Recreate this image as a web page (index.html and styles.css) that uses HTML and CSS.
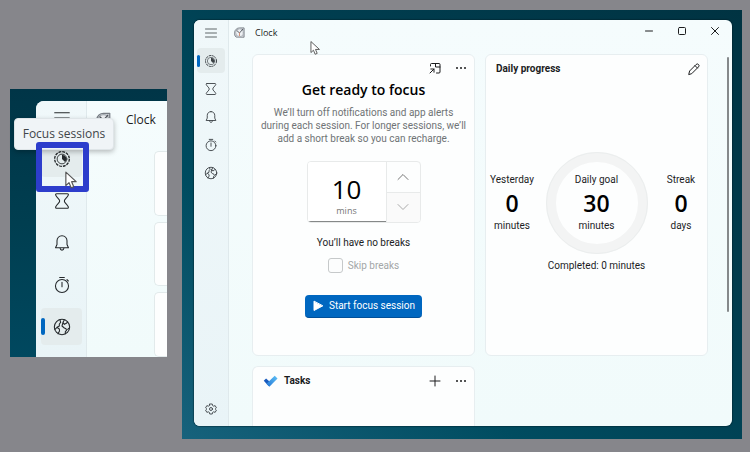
FILE: index.html
```html
<!DOCTYPE html>
<html lang="en">
<head>
<meta charset="utf-8">
<meta name="viewport" content="width=device-width, initial-scale=1">
<title>Clock</title>
<link rel="stylesheet" href="styles.css">
</head>
<body>
<svg class="sprite" aria-hidden="true">
  <linearGradient id="blue" x1="0" y1="1" x2="1" y2="0"><stop offset="0" stop-color="#2374d4"/><stop offset="1" stop-color="#5fc3f7"/></linearGradient>
  <symbol id="menu" viewBox="0 0 24 24"><path d="M1 4h22M1 12h22M1 20h22"/></symbol>
  <symbol id="focus" viewBox="0 0 24 24"><circle class="dashes" cx="12" cy="12" r="11"/><circle cx="12" cy="12" r="7.300" stroke-width="1.300"/><path class="solid" d="M12 5.500a6.500 6.500 0 0 1 4.600 11.100L12 12z"/></symbol>
  <symbol id="timer" viewBox="0 0 24 24"><path d="M4 1h16a1.500 1.500 0 0 1 1.400 2.200C20 7 15.500 9 15.500 12s4.500 5 5.900 8.800A1.500 1.500 0 0 1 20 23H4a1.500 1.500 0 0 1-1.400-2.200C4 17 8.500 15 8.500 12S4 7 2.600 3.200A1.500 1.500 0 0 1 4 1z"/></symbol>
  <symbol id="bell" viewBox="0 0 24 24"><path d="M12 1.200c-4.500 0-7.500 3.300-7.500 7.500v5.500L2.300 19h19.400l-2.200-4.800V8.700c0-4.200-3-7.500-7.500-7.500zM9 19.500c.3 2 1.400 3.200 3 3.200s2.700-1.200 3-3.200"/></symbol>
  <symbol id="stopwatch" viewBox="0 0 24 24"><circle cx="12" cy="13.500" r="9.800"/><path d="M8.500.8h7M12 8v6.500M19.500 4l2 2"/></symbol>
  <symbol id="globe" viewBox="0 0 24 24"><circle cx="12" cy="12" r="11.500"/><path d="M9 1.500l1 3.500-2 2.500v3L4.500 12.500l-3 3M4.500 12.500l3.500 2.500.3 3L6 22M15.500 1.500l-2 3.500 2 3 3-1.500 2-2M13.500 5l-1.500 5.500 3.500 3 2.500 1 .8 2.500-1.800 2 0 3M23 13.500l-2.500 2"/></symbol>
  <symbol id="clock" viewBox="0 0 24 24"><path class="case" d="M4 21.500C1 19 .8 15 1.200 12 2 6 6.500 2 12 2h10v19.500z"/><circle class="dial" cx="12" cy="12.500" r="8.500"/><path d="M6.500 8 12 13l7-8"/><path class="hand" d="M12 13v6"/></symbol>
  <symbol id="pointer" viewBox="0 0 16 24"><path d="M1.500 1.500v17l4-3.800 2.700 6.500 3.300-1.400-2.700-6.300h5.700z"/></symbol>
</svg>

<main class="board">
  <section class="desktop desktop-detail" aria-label="Navigation detail">
    <div class="window window-detail">
      <nav class="rail rail-large" aria-label="Enlarged navigation">
        <button class="rail-item rail-menu" aria-label="Menu"><svg><use href="#menu"/></svg></button>
        <button class="rail-item hovered" aria-label="Focus sessions"><svg><use href="#focus"/></svg></button>
        <button class="rail-item" aria-label="Timer"><svg><use href="#timer"/></svg></button>
        <button class="rail-item" aria-label="Alarm"><svg><use href="#bell"/></svg></button>
        <button class="rail-item" aria-label="Stopwatch"><svg><use href="#stopwatch"/></svg></button>
        <button class="rail-item selected" aria-label="World clock"><svg><use href="#globe"/></svg></button>
      </nav>
      <div class="detail-body">
        <header class="detail-title"><svg class="app-icon"><use href="#clock"/></svg><span>Clock</span></header>
        <div class="detail-cards"><div></div><div></div><div></div></div>
      </div>
    </div>
    <div class="tooltip" role="tooltip">Focus sessions</div>
    <div class="highlight"></div>
    <svg class="pointer pointer-large"><use href="#pointer"/></svg>
  </section>

  <section class="desktop desktop-app" aria-label="Desktop">
    <div class="window">
      <nav class="rail" aria-label="Navigation">
        <button class="rail-item rail-menu" aria-label="Menu"><svg><use href="#menu"/></svg></button>
        <button class="rail-item selected" aria-label="Focus sessions"><svg><use href="#focus"/></svg></button>
        <button class="rail-item" aria-label="Timer"><svg><use href="#timer"/></svg></button>
        <button class="rail-item" aria-label="Alarm"><svg><use href="#bell"/></svg></button>
        <button class="rail-item" aria-label="Stopwatch"><svg><use href="#stopwatch"/></svg></button>
        <button class="rail-item" aria-label="World clock"><svg><use href="#globe"/></svg></button>
        <button class="rail-item rail-settings" aria-label="Settings"><svg viewBox="0 0 24 24"><path d="M9.500 2h5l.7 3.200 2 1.100 3.100-1 2.500 4.400-2.400 2.300 2.400 2.300-2.500 4.400-3.100-1-2 1.100-.7 3.200h-5l-.7-3.200-2-1.100-3.100 1-2.500-4.400L3.600 12 1.200 9.700l2.500-4.400 3.100 1 2-1.100z"/><circle cx="12" cy="12" r="3"/></svg></button>
      </nav>
      <div class="app">
        <header class="titlebar">
          <svg class="app-icon"><use href="#clock"/></svg>
          <span>Clock</span>
          <div class="window-buttons">
            <button aria-label="Minimize"><svg viewBox="0 0 10 10"><path d="M1.500 5h7"/></svg></button>
            <button aria-label="Maximize"><svg viewBox="0 0 10 10"><rect x="1.500" y="1.500" width="7" height="7" rx="1"/></svg></button>
            <button aria-label="Close"><svg viewBox="0 0 10 10"><path d="M1.500 1.500l7 7M8.500 1.500l-7 7"/></svg></button>
          </div>
        </header>
        <div class="cards">
          <section class="card focus-card">
            <div class="card-tools">
              <button aria-label="Keep on top"><svg viewBox="0 0 12 12"><path d="M1.500 4V2.500a1 1 0 0 1 1-1h7.500a1 1 0 0 1 1 1V10a1 1 0 0 1-1 1H7.500M6.500 1.500v3.500H11M1 11l4-4M1.800 7H5v3.200"/></svg></button>
              <button aria-label="More options"><svg viewBox="0 0 12 12"><path class="dots" d="M2 6h.01M6 6h.01M10 6h.01"/></svg></button>
            </div>
            <h1>Get ready to focus</h1>
            <p class="intro">We’ll turn off notifications and app alerts<br>during each session. For longer sessions, we’ll<br>add a short break so you can recharge.</p>
            <div class="stepper">
              <div class="stepper-value">
                <input id="minutes" type="text" inputmode="numeric" value="10">
                <label for="minutes">mins</label>
              </div>
              <div class="stepper-buttons">
                <button aria-label="Increase"><svg viewBox="0 0 12 12"><path d="M1 8.500l5-5 5 5"/></svg></button>
                <button aria-label="Decrease" disabled><svg viewBox="0 0 12 12"><path d="M1 3.500l5 5 5-5"/></svg></button>
              </div>
            </div>
            <p class="breaks">You’ll have no breaks</p>
            <label class="skip"><input type="checkbox" disabled><span>Skip breaks</span></label>
            <button class="start"><svg viewBox="0 0 12 12"><path d="M2 1.500v9L10.500 6z"/></svg>Start focus session</button>
          </section>

          <section class="card progress-card">
            <header class="card-head">
              <h2>Daily progress</h2>
              <button aria-label="Edit daily goal"><svg viewBox="0 0 12 12"><path d="M.8 11.200l.8-3.200 6.500-6.500a1.600 1.600 0 0 1 2.400 2.400L4 10.400zM7 2.600 9.400 5"/></svg></button>
            </header>
            <div class="stats">
              <div class="stat"><span>Yesterday</span><strong>0</strong><span>minutes</span></div>
              <div class="stat goal"><span>Daily goal</span><strong>30</strong><span>minutes</span></div>
              <div class="stat"><span>Streak</span><strong>0</strong><span>days</span></div>
            </div>
            <p class="completed">Completed: 0 minutes</p>
          </section>

          <section class="card tasks-card">
            <header class="card-head">
              <svg class="todo" viewBox="0 0 16 12"><path class="todo-short" d="M3.300 3.200.8 5.700 6 11.200l3-2.900z"/><path class="todo-long" d="M12.500.4 15.500 3.300 6.800 12 3.600 9z"/></svg>
              <h2>Tasks</h2>
              <button class="add" aria-label="Add task"><svg viewBox="0 0 12 12"><path d="M6 1v10M1 6h10"/></svg></button>
              <button aria-label="Task options"><svg viewBox="0 0 12 12"><path class="dots" d="M2 6h.01M6 6h.01M10 6h.01"/></svg></button>
            </header>
          </section>
        </div>
        <div class="scrollbar"></div>
      </div>
    </div>
    <svg class="pointer"><use href="#pointer"/></svg>
  </section>
</main>
</body>
</html>
```
FILE: styles.css
```css
:root {
  --text: Roboto, "Open Sans", sans-serif;
  --display: "Open Sans", "Noto Sans", sans-serif;
}

* { box-sizing: border-box; }

body {
  margin: 0;
  background: #86868b;
  color: #1c1d1e;
  font-family: var(--text);
  font-size: 10px;
  line-height: 14px;
}

h1, h2, p { margin: 0; }

button {
  display: flex;
  align-items: center;
  justify-content: center;
  padding: 0;
  border: 0;
  background: none;
  color: inherit;
  font: inherit;
}

svg {
  display: block;
  flex: none;
  width: 12px;
  height: 12px;
  overflow: visible;
  fill: none;
  stroke: currentColor;
  stroke-width: 1;
  stroke-linecap: round;
  stroke-linejoin: round;
}

symbol { overflow: visible; }
.sprite { position: absolute; width: 0; height: 0; }
.solid { fill: currentColor; stroke: none; }
.dots { stroke-width: 2; }
.dashes { stroke-width: 2; stroke-dasharray: 4.3 1.46; stroke-linecap: butt; }

.board {
  display: flex;
  gap: 15px;
  align-items: flex-start;
  min-height: 100vh;
  padding: 10px 8px 13px 10px;
}

.desktop { position: relative; display: flex; }

.desktop-detail {
  flex: none;
  width: 157px;
  margin-top: 79px;
  padding: 12px 0 0 26px;
  background: linear-gradient(#003547, #003e50 50%, #00485f);
}

.desktop-app {
  flex: 1;
  align-self: stretch;
  padding: 10px 10px 13px 12px;
  background: linear-gradient(to top right, #17627c, #004c60 30%, #003e50 60%, #003342);
}

.window {
  display: flex;
  flex: 1;
  overflow: hidden;
  border-radius: 6px;
  background: linear-gradient(#f5fcfd, #f1fbfb);
  box-shadow: 0 0 1px 1px rgba(0, 25, 35, 0.4);
}

.window-detail { border-radius: 8px 0 0 0; box-shadow: none; }

.rail {
  display: flex;
  flex: none;
  flex-direction: column;
  gap: 3px;
  width: 35px;
  padding: 0 3px 5px;
  border-right: 1px solid #dfe9ec;
  background: linear-gradient(#f0f8fa, #e9f4f7);
}

.rail-item {
  position: relative;
  height: 25px;
  border-radius: 4px;
  color: #3b4145;
}

.rail-item svg { stroke-width: 1.8; }
.rail .rail-menu svg { stroke-width: 1.6; }
.rail-item.selected, .rail-item.hovered { background: #e4eced; }

.rail-item.selected::before {
  content: "";
  position: absolute;
  left: 0;
  width: 3px;
  height: 12px;
  border-radius: 2px;
  background: #0067c0;
}

.rail-settings { margin-top: auto; }

.rail-large {
  gap: 5px;
  width: 51px;
  padding: 0 4px 12px 5px;
}

.rail-large .rail-item { height: 37px; color: #24282b; }
.rail-large .rail-menu { height: 34px; }
.rail-large svg { width: 16px; height: 16px; stroke-width: 1.6; }
.rail-large .rail-item.selected::before { width: 4px; height: 17px; }

.detail-body { display: flex; flex: 1; flex-direction: column; gap: 13px; }

.detail-title {
  display: flex;
  gap: 15px;
  align-items: center;
  height: 37px;
  padding-left: 9px;
  font: 12px var(--display);
}

.detail-title .app-icon { width: 15px; height: 15px; }

.detail-cards {
  display: grid;
  flex: 1;
  grid-auto-rows: 1fr;
  gap: 6px;
  padding-left: 67px;
}

.detail-cards div {
  border: 1px solid #e2eaeb;
  border-right: 0;
  border-radius: 5px 0 0 5px;
  background: #fdfefe;
}

.tooltip {
  position: absolute;
  top: 29px;
  left: 4px;
  width: 100px;
  border: 1px solid #dfe5e8;
  border-radius: 4px;
  background: #f0f4f7;
  box-shadow: 0 2px 5px rgba(0, 0, 0, 0.25);
  color: #404549;
  font: 12px/30px var(--display);
  text-align: center;
}

.highlight {
  position: absolute;
  top: 53px;
  left: 26px;
  width: 53px;
  height: 50px;
  border: 6px solid #2d3dcc;
  border-radius: 3px;
}

.pointer {
  position: absolute;
  top: 31px;
  left: 128px;
  width: 10px;
  height: 15px;
  fill: #fff;
  stroke: #555;
  stroke-width: 1.5;
}

.pointer-large { top: 82px; left: 54px; width: 14px; height: 19px; }

.app {
  position: relative;
  display: flex;
  flex: 1;
  flex-direction: column;
}

.titlebar {
  display: flex;
  gap: 10px;
  align-items: center;
  height: 24px;
  padding: 0 1px 0 5px;
  font: 9px var(--display);
}

.app-icon { width: 11px; height: 11px; color: #52575d; stroke-width: 2; }
.case { fill: #d3d7dc; stroke: #777d84; }
.dial { fill: #eef1f4; stroke: #a4abb1; }
.hand { stroke: #d58a70; }

.window-buttons { display: flex; align-self: flex-start; margin-left: auto; }
.window-buttons button { width: 33px; height: 22px; }
.window-buttons svg { width: 10px; height: 10px; }

.cards {
  display: grid;
  flex: 1;
  grid-template-columns: repeat(2, minmax(0, 1fr));
  grid-template-rows: auto 1fr;
  gap: 10px;
  padding: 10px 24px 0 23px;
}

.card {
  border: 1px solid #e7eef0;
  border-radius: 6px;
  background: #fdfefe;
}

.focus-card {
  display: flex;
  flex-direction: column;
  align-items: center;
  min-height: 302px;
  padding: 7px 7px 37px;
  text-align: center;
}

.card-tools { display: flex; gap: 14px; align-self: flex-end; }

h1 {
  margin-top: 7px;
  color: #000;
  font: 600 14px/18px var(--display);
}

.intro { margin-top: 7px; color: #6f7375; line-height: 13px; white-space: nowrap; }

.stepper {
  display: flex;
  width: 114px;
  height: 62px;
  margin-top: 16px;
  overflow: hidden;
  border: 1px solid #e8eaea;
  border-radius: 4px;
}

.stepper-value {
  display: flex;
  flex: 1;
  flex-direction: column;
  align-items: center;
  padding-top: 12px;
  border-bottom: 1px solid #858888;
  background: #fff;
  color: #777;
  font: 9px/14px var(--display);
}

.stepper-value input {
  width: 100%;
  height: 30px;
  padding: 0;
  border: 0;
  background: none;
  color: #000;
  font: 26px/30px var(--display);
  text-align: center;
}

.stepper-buttons {
  display: grid;
  width: 34px;
  border-left: 1px solid #e8eaea;
  color: #777;
}

.stepper-buttons button:disabled {
  border-top: 1px solid #e8eaea;
  background: #fafafa;
  color: #aaa;
}

.breaks { margin-top: 13px; }

.skip {
  display: flex;
  gap: 5px;
  align-items: center;
  margin-top: 8px;
  color: #a3a6a7;
}

.skip input {
  width: 15px;
  height: 15px;
  margin: 0;
  border: 1px solid #c6c9ca;
  border-radius: 3px;
  background: #fcfdfd;
  appearance: none;
}

.start {
  gap: 5px;
  height: 23px;
  margin-top: auto;
  padding: 0 7px;
  border-bottom: 1px solid #004f99;
  border-radius: 4px;
  background: #0067c0;
  color: #fff;
}

.start svg { fill: #fff; }

.card-head {
  display: flex;
  align-items: center;
  height: 28px;
  padding: 0 7px 0 10px;
}

h2 { font-size: 10px; font-weight: 700; line-height: 14px; }
.card-head h2 { margin-right: auto; }

.stats {
  display: grid;
  grid-template-columns: 51px 102px 51px;
  gap: 8px;
  align-items: center;
  justify-content: center;
  margin-top: 69px;
}

.stat {
  display: flex;
  flex-direction: column;
  align-items: center;
}

.stat strong {
  margin: 3px 0;
  color: #000;
  font: 600 23px/26px var(--display);
}

.goal {
  justify-content: center;
  height: 102px;
  border: 10px solid #f3f4f4;
  border-radius: 50%;
  outline: 1px solid #ebeeee;
  outline-offset: -1px;
}

.completed { margin-top: 5px; text-align: center; }

.tasks-card { border-bottom: 0; border-radius: 6px 6px 0 0; }
.tasks-card .card-head { gap: 6px; }
.tasks-card .add { margin-right: 8px; }
.todo { width: 15px; height: 12px; stroke: none; }
.todo-short { fill: #185abd; }
.todo-long { fill: url(#blue); }

.scrollbar {
  position: absolute;
  top: 37px;
  right: 3px;
  width: 2px;
  height: 255px;
  border-radius: 1px;
  background: #85898b;
}
```
